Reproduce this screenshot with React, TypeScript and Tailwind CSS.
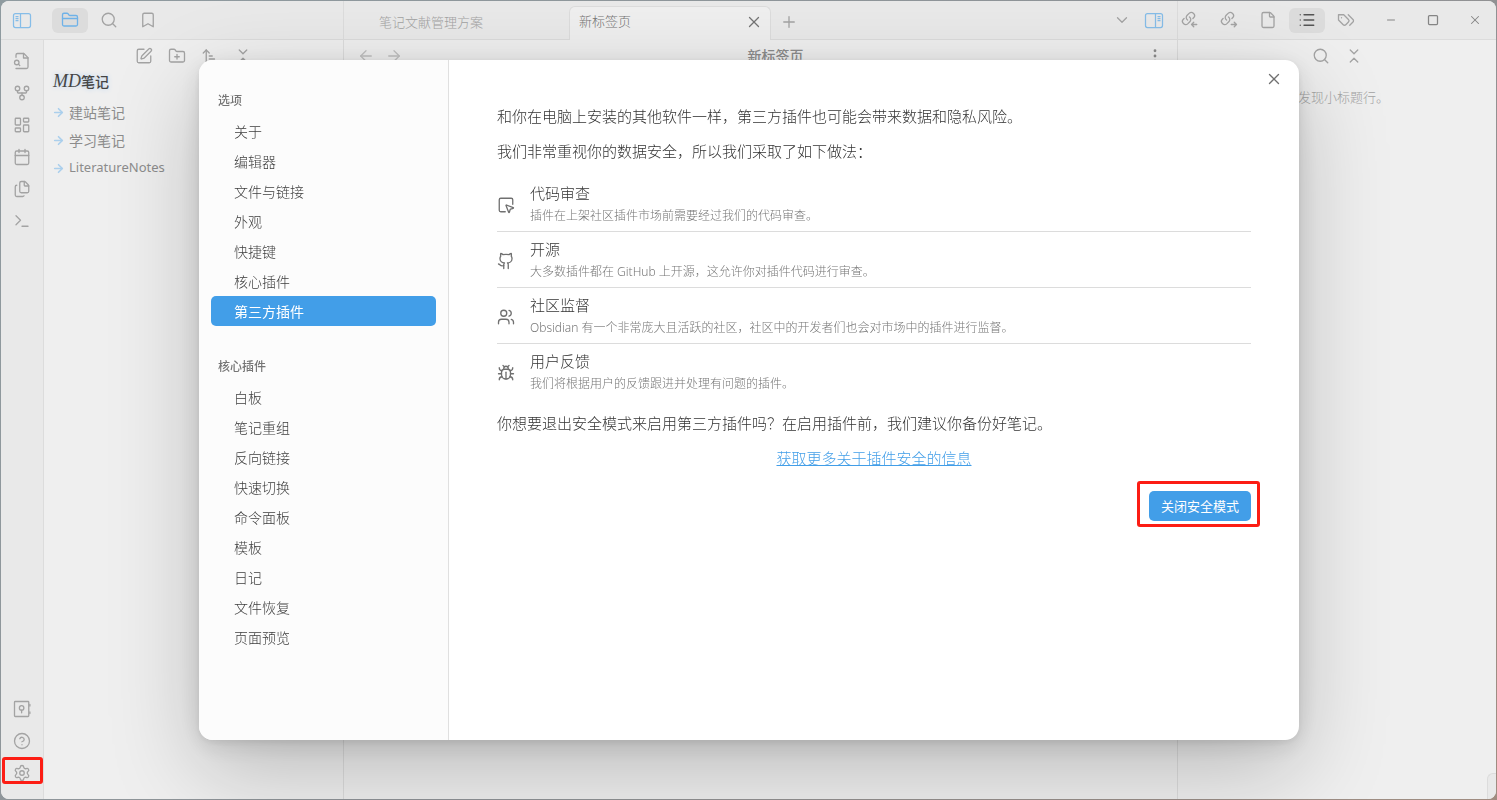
import { useState, type ReactNode } from "react";
import {
  ArrowLeft,
  ArrowRight,
  ArrowUpNarrowWide,
  Bookmark,
  Bug,
  Calendar,
  ChevronDown,
  ChevronsDownUp,
  CircleQuestionMark,
  EllipsisVertical,
  File,
  Files,
  FolderPlus,
  GitFork,
  Github,
  LayoutDashboard,
  List,
  Minus,
  Plus,
  Search,
  Settings,
  Square,
  SquareMousePointer,
  SquarePen,
  Terminal,
  Users,
  X,
} from "lucide-react";

const Svg = ({ children }: { children: ReactNode }) => (
  <svg
    width={18}
    height={18}
    viewBox="0 0 24 24"
    fill="none"
    stroke="currentColor"
    strokeWidth={1.75}
    strokeLinecap="round"
    strokeLinejoin="round"
  >
    {children}
  </svg>
);

const SidebarToggle = ({ right }: { right?: boolean }) => (
  <svg width={20} height={18} viewBox="0 0 20 18" fill="none" stroke="currentColor" strokeWidth={1.25}>
    <rect x="1.5" y="2.5" width="17" height="14" rx="2" />
    {right ? (
      <path d="M11.5 2.5v14M13.5 5.5h3M13.5 7.5h3M13.5 9.5h3" />
    ) : (
      <path d="M8.5 2.5v14M3.5 5.5h3M3.5 7.5h3M3.5 9.5h3" />
    )}
  </svg>
);

const FileSearchIcon = () => (
  <Svg>
    <path d="M4 22h14a2 2 0 0 0 2-2V7.5L14.5 2H6a2 2 0 0 0-2 2v3" />
    <path d="M14 2v6h6" />
    <circle cx="5" cy="14" r="3" />
    <path d="m9 18-1.5-1.5" />
  </Svg>
);

const FolderIcon = () => (
  <Svg>
    <path d="M4 20h16a2 2 0 0 0 2-2V8a2 2 0 0 0-2-2h-7.9a2 2 0 0 1-1.7-.9l-.8-1.2A2 2 0 0 0 7.9 3H4a2 2 0 0 0-2 2v13a2 2 0 0 0 2 2Z" />
    <path d="M2 10h20" />
  </Svg>
);

const TagsIcon = () => (
  <Svg>
    <path d="M9 5H2v7l6.29 6.29c.94.94 2.48.94 3.42 0l3.58-3.58c.94-.94.94-2.48 0-3.42L9 5Z" />
    <path d="M6 9.01V9" />
    <path d="m15 5 6.3 6.3a2.4 2.4 0 0 1 0 3.4L17 19" />
  </Svg>
);

const VaultIcon = () => (
  <Svg>
    <rect x="2" y="2" width="19" height="20" rx="1" />
    <circle cx="11.5" cy="10.5" r="3" />
    <path d="M11.5 13.5V17M22.5 6v2M22.5 16v2" />
  </Svg>
);

const ChainIcon = ({ out }: { out?: boolean }) => (
  <Svg>
    <path d="M8.7 12a4.1 4.1 0 0 1-.46-6.31l2.55-2.52a4.3 4.3 0 0 1 5.96.06 4.15 4.15 0 0 1 .05 5.86L15.9 10" />
    <path d="M11.3 8a4.1 4.1 0 0 1 .45 6.31L9.2 16.82a4.3 4.3 0 0 1-5.96-.07 4.15 4.15 0 0 1-.05-5.85L4.1 10" />
    <path d={out ? "m19 15 3 3-3 3M22 18h-7" : "m17 15-3 3 3 3M21 18h-7"} />
  </Svg>
);

const IconButton = ({
  label,
  className = "",
  children,
}: {
  label: string;
  className?: string;
  children: ReactNode;
}) => (
  <button
    aria-label={label}
    className={`flex shrink-0 items-center justify-center ${className}`}
  >
    {children}
  </button>
);

const icon = { size: 18, strokeWidth: 1.75 };

const options = [
  "关于",
  "编辑器",
  "文件与链接",
  "外观",
  "快捷键",
  "核心插件",
  "第三方插件",
];

const corePlugins = [
  "白板",
  "笔记重组",
  "反向链接",
  "快速切换",
  "命令面板",
  "模板",
  "日记",
  "文件恢复",
  "页面预览",
];

const measures = [
  {
    icon: <SquareMousePointer {...icon} />,
    title: "代码审查",
    desc: "插件在上架社区插件市场前需要经过我们的代码审查。",
  },
  {
    icon: <Github {...icon} />,
    title: "开源",
    desc: "大多数插件都在 GitHub 上开源，这允许你对插件代码进行审查。",
  },
  {
    icon: <Users {...icon} />,
    title: "社区监督",
    desc: "Obsidian 有一个非常庞大且活跃的社区，社区中的开发者们也会对市场中的插件进行监督。",
  },
  {
    icon: <Bug {...icon} />,
    title: "用户反馈",
    desc: "我们将根据用户的反馈跟进并处理有问题的插件。",
  },
];

const TitleBar = () => (
  <header className="flex h-[39px] shrink-0 bg-[#e9e9e9] text-[#a3a3a3]">
    <div className="flex w-[343px] shrink-0 items-center border-r border-b border-[#dcdcdc]">
      <IconButton label="折叠左侧栏" className="w-[42px] text-[#86bde8]">
        <SidebarToggle />
      </IconButton>
      <div className="ml-[9px] flex gap-[3px]">
        <IconButton label="文件列表" className="h-[25px] w-9 rounded-md bg-[#dcdcdc] text-[#6fb2e8]">
          <FolderIcon />
        </IconButton>
        <IconButton label="搜索" className="h-[25px] w-9">
          <Search {...icon} />
        </IconButton>
        <IconButton label="书签" className="h-[25px] w-9">
          <Bookmark {...icon} />
        </IconButton>
      </div>
    </div>
    <div className="flex min-w-0 flex-1 items-end border-b border-[#dcdcdc] pl-6 text-[13px]">
      <div className="flex h-[33px] w-[201px] items-center pl-[11px]">笔记文献管理方案</div>
      <div className="-mb-px flex h-[34px] w-[202px] items-center justify-between rounded-t-md border border-b-0 border-[#dcdcdc] bg-[#efefef] pr-[7px] pb-[3px] pl-[9px] text-[#757575]">
        新标签页
        <IconButton label="关闭标签页">
          <X {...icon} />
        </IconButton>
      </div>
      <IconButton label="新建标签页" className="h-[34px] w-9">
        <Plus {...icon} />
      </IconButton>
      <div className="ml-auto flex h-[38px] items-center gap-[13px] pr-[13px]">
        <IconButton label="标签页列表">
          <ChevronDown {...icon} />
        </IconButton>
        <IconButton label="折叠右侧栏" className="text-[#86bde8]">
          <SidebarToggle right />
        </IconButton>
      </div>
    </div>
    <div className="flex w-[319px] shrink-0 items-center border-b border-l border-[#dcdcdc]">
      <div className="-ml-1.5 flex gap-[3px]">
        <IconButton label="反向链接" className="h-[25px] w-9">
          <ChainIcon />
        </IconButton>
        <IconButton label="出链" className="h-[25px] w-9">
          <ChainIcon out />
        </IconButton>
        <IconButton label="文件" className="h-[25px] w-9">
          <File {...icon} />
        </IconButton>
        <IconButton label="大纲" className="h-[25px] w-9 rounded-md bg-[#dcdcdc] text-[#555555]">
          <List {...icon} />
        </IconButton>
        <IconButton label="标签" className="h-[25px] w-9">
          <TagsIcon />
        </IconButton>
      </div>
      <div className="ml-auto flex text-[#858585]">
        <IconButton label="最小化" className="w-[42px]">
          <Minus size={12} strokeWidth={2} />
        </IconButton>
        <IconButton label="最大化" className="w-[42px]">
          <Square size={12} strokeWidth={2.5} />
        </IconButton>
        <IconButton label="关闭窗口" className="w-[42px]">
          <X size={14} strokeWidth={1.75} />
        </IconButton>
      </div>
    </div>
  </header>
);

const Ribbon = () => (
  <aside className="flex w-[43px] shrink-0 flex-col justify-between border-r border-[#dcdcdc] bg-[#e9e9e9] pt-3 pb-[17px] text-[#a3a3a3]">
    <div className="flex flex-col items-center gap-[14px]">
      <IconButton label="快速切换">
        <FileSearchIcon />
      </IconButton>
      <IconButton label="关系图谱">
        <GitFork {...icon} />
      </IconButton>
      <IconButton label="新建白板">
        <LayoutDashboard {...icon} />
      </IconButton>
      <IconButton label="打开日记">
        <Calendar {...icon} />
      </IconButton>
      <IconButton label="插入模板">
        <Files {...icon} />
      </IconButton>
      <IconButton label="命令面板">
        <Terminal {...icon} />
      </IconButton>
    </div>
    <div className="flex flex-col items-center gap-[14px]">
      <IconButton label="打开其他仓库">
        <VaultIcon />
      </IconButton>
      <IconButton label="帮助">
        <CircleQuestionMark {...icon} />
      </IconButton>
      <div className="relative flex">
        <IconButton label="设置">
          <Settings {...icon} />
        </IconButton>
        <span className="pointer-events-none absolute -top-[7px] -right-3 -bottom-[2px] -left-[11px] rounded-[3px] border-[3px] border-[#fc1d14]" />
      </div>
    </div>
  </aside>
);

const Explorer = () => (
  <aside className="w-[300px] shrink-0 border-r border-[#dcdcdc] text-[#8c8c8c]">
    <div className="flex justify-center gap-[15px] pt-[7px] text-[#a3a3a3]">
      <IconButton label="新建笔记">
        <SquarePen {...icon} />
      </IconButton>
      <IconButton label="新建文件夹">
        <FolderPlus {...icon} />
      </IconButton>
      <IconButton label="排序">
        <ArrowUpNarrowWide {...icon} />
      </IconButton>
      <IconButton label="全部折叠">
        <ChevronsDownUp {...icon} />
      </IconButton>
    </div>
    <h2 className="mt-[6px] pl-[9px] text-[14px] leading-5 font-medium text-[#454545] [text-shadow:0_0_5px_#b5d2f0]">
      <span className="font-['Liberation_Serif'] text-[18px] italic">MD</span>笔记
    </h2>
    <ul className="mt-[6px] text-[14px] font-normal">
      {["建站笔记", "学习笔记"].map((name) => (
        <li key={name} className="flex h-7 items-center gap-1 pl-[8px]">
          <ArrowRight size={13} strokeWidth={3} className="text-[#abcfec]" />
          {name}
        </li>
      ))}
      <li className="flex h-7 items-center gap-1 pl-[8px] text-[13px]">
        <ArrowRight size={13} strokeWidth={3} className="text-[#abcfec]" />
        LiteratureNotes
      </li>
    </ul>
  </aside>
);

const NavGroup = ({
  title,
  items,
  active,
  onSelect,
}: {
  title: string;
  items: string[];
  active: string;
  onSelect: (name: string) => void;
}) => (
  <div>
    <h3 className="mb-[5px] px-[7px] text-[12px] leading-5 font-medium text-[#757575]">{title}</h3>
    {items.map((name) => (
      <button
        key={name}
        onClick={() => onSelect(name)}
        className={`flex h-[30px] w-full items-center rounded-[5px] pl-[23px] text-[14px] ${
          active === name ? "bg-[#429ee8] font-normal text-white" : "text-[#3c3c3c]"
        }`}
      >
        {name}
      </button>
    ))}
  </div>
);

const SettingsModal = () => {
  const [active, setActive] = useState("第三方插件");

  return (
    <div className="fixed inset-0 flex items-center justify-center pl-px">
      <div
        role="dialog"
        aria-label="设置"
        className="relative flex h-[85vh] w-full max-w-[1100px] overflow-hidden rounded-[14px] bg-white shadow-[0_2px_7px_rgba(0,0,0,0.07),0_6px_25px_rgba(0,0,0,0.11),0_30px_90px_rgba(0,0,0,0.22)]"
      >
        <nav className="flex w-[250px] shrink-0 flex-col gap-[31px] border-r border-[#e0e0e0] bg-[#fcfcfc] px-3 pt-[31px]">
          <NavGroup title="选项" items={options} active={active} onSelect={setActive} />
          <NavGroup title="核心插件" items={corePlugins} active={active} onSelect={setActive} />
        </nav>
        <main className="min-w-0 flex-1 px-12 pt-[45px] text-[15px] leading-[22px] text-[#333333]">
          <p>和你在电脑上安装的其他软件一样，第三方插件也可能会带来数据和隐私风险。</p>
          <p className="mt-[13px]">我们非常重视你的数据安全，所以我们采取了如下做法：</p>
          <ul className="mt-[14px] divide-y divide-[#dcdcdc]">
            {measures.map((m) => (
              <li key={m.title} className="flex items-center gap-[15px] pt-[7px] pb-[5px] text-[#707070]">
                {m.icon}
                <div>
                  <h4 className="leading-5 text-[#333333]">{m.title}</h4>
                  <p className="mt-[3px] text-[12px] leading-5 text-[#777777]">{m.desc}</p>
                </div>
              </li>
            ))}
          </ul>
          <p className="mt-[13px]">
            你想要退出安全模式来启用第三方插件吗？在启用插件前，我们建议你备份好笔记。
          </p>
          <p className="mt-[13px] text-center">
            <a href="#security" className="text-[#429ee8] underline">
              获取更多关于插件安全的信息
            </a>
          </p>
          <div className="mt-[22px] flex justify-end">
            <div className="relative">
              <button className="h-[30px] rounded-[5px] bg-[#429ee8] px-3 text-[13px] font-normal text-white">
                关闭安全模式
              </button>
              <span className="pointer-events-none absolute -top-[10px] -right-[9px] -bottom-[6px] -left-3 rounded-[3px] border-[3px] border-[#fc1d14]" />
            </div>
          </div>
        </main>
        <button aria-label="关闭" className="absolute top-[10px] right-4 text-[#707070]">
          <X {...icon} />
        </button>
      </div>
    </div>
  );
};

const App = () => (
  <div className="h-screen bg-[linear-gradient(135deg,#8f9ba0,#8f9296_60%,#a08c80)] p-px font-['Noto_Sans','Noto_Sans_CJK_SC',sans-serif] font-light">
    <div className="flex h-full flex-col overflow-hidden rounded-lg bg-[#efefef]">
      <TitleBar />
      <div className="flex min-h-0 flex-1">
        <Ribbon />
        <Explorer />
        <section className="min-w-0 flex-1">
          <div className="flex items-center justify-between px-[13px] pt-[6px] text-[#c0c0c0]">
            <div className="flex flex-1 gap-[10px]">
              <IconButton label="后退">
                <ArrowLeft {...icon} />
              </IconButton>
              <IconButton label="前进">
                <ArrowRight {...icon} />
              </IconButton>
            </div>
            <h1 className="pl-[30px] text-[14px] leading-5 font-medium text-[#8c8c8c]">新标签页</h1>
            <div className="flex flex-1 justify-end text-[#8c8c8c]">
              <IconButton label="更多选项">
                <EllipsisVertical {...icon} />
              </IconButton>
            </div>
          </div>
        </section>
        <aside className="flex w-[319px] shrink-0 flex-col border-l border-[#dcdcdc] text-[#a3a3a3]">
          <div className="flex justify-center gap-[15px] pt-[7px]">
            <IconButton label="搜索大纲">
              <Search {...icon} />
            </IconButton>
            <IconButton label="全部折叠">
              <ChevronsDownUp {...icon} />
            </IconButton>
          </div>
          <p className="mt-[22px] text-center text-[13px] leading-5">未发现小标题行。</p>
          <div className="mt-auto h-[26px] w-[9px] self-end rounded-tl-md border-t border-l border-[#dcdcdc] bg-[#e9e9e9]" />
        </aside>
      </div>
    </div>
    <SettingsModal />
  </div>
);

export default App;
